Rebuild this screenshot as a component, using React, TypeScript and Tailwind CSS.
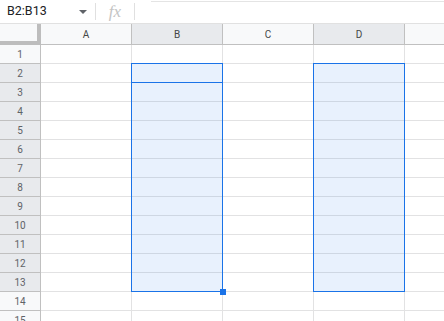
import React from "react";

const cols = ["A", "B", "C", "D"];
const selCols = new Set(["B", "D"]);
const rows = Array.from({ length: 15 }, (_, i) => i + 1);

export default function App() {
  return (
    <div
      className="relative w-[444px] h-[321px] overflow-hidden bg-white"
      style={{ fontFamily: "Roboto, 'Liberation Sans', Arial, sans-serif" }}
    >
      {/* Formula bar */}
      <div className="flex h-[24px] items-center border-b border-[#e1e1e1]">
        <div className="flex w-[95px] items-center pl-[7px] pr-[8px]">
          <span className="flex-1 text-[12.5px] text-[#202124]">B2:B13</span>
          <span className="h-0 w-0 border-l-[4px] border-r-[4px] border-t-[4px] border-l-transparent border-r-transparent border-t-[#5f6368]" />
        </div>
        <div className="h-[17px] w-px bg-[#e0e0e0]" />
        <div className="flex w-[38px] justify-center">
          <span
            className="text-[17px] italic leading-none text-[#c4c4c4]"
            style={{ fontFamily: "'Liberation Serif', 'DejaVu Serif', serif" }}
          >
            fx
          </span>
        </div>
        <div className="h-[17px] w-px bg-[#e0e0e0]" />
        <div className="flex-1 self-start pl-[16px]">
          <div className="mt-px h-px bg-[#e4e4e4]" />
        </div>
      </div>

      {/* Column header row */}
      <div className="flex h-[21px]">
        <div className="h-[21px] w-[41px] border-r-4 border-b-4 border-[#bdbdbd] bg-[#f8f9fa]" />
        {cols.map((c) => (
          <div
            key={c}
            className={`flex h-[21px] w-[91px] items-center justify-center border-r border-b border-[#c0c0c0] text-[10px] text-[#444746] ${
              selCols.has(c) ? "bg-[#e8eaed]" : "bg-[#f8f9fa]"
            }`}
          >
            {c}
          </div>
        ))}
        <div className="h-[21px] flex-1 border-b border-[#c0c0c0] bg-[#f8f9fa]" />
      </div>

      {/* Grid rows */}
      {rows.map((r) => {
        const sel = r >= 2 && r <= 13;
        return (
          <div key={r} className="flex h-[19px]">
            <div
              className={`flex w-[41px] items-center justify-center border-r border-b border-[#c0c0c0] text-[10px] text-[#5f6368] ${
                sel ? "bg-[#e8eaed]" : "bg-[#f8f9fa]"
              }`}
            >
              {r}
            </div>
            {cols.map((c) => (
              <div key={c} className="w-[91px] border-r border-b border-[#e2e2e3]" />
            ))}
            <div className="flex-1 border-b border-[#e2e2e3]" />
          </div>
        );
      })}

      {/* Selection B2:B13 */}
      <div className="absolute left-[131px] top-[63px] h-[229px] w-[92px] border border-[#1a73e8] bg-[#1a73e8]/10" />
      {/* Active cell B2 */}
      <div className="absolute left-[131px] top-[63px] h-[20px] w-[92px] border border-[#1a73e8]" />
      {/* Fill handle */}
      <div className="absolute left-[220px] top-[289px] h-[6px] w-[6px] bg-[#1a73e8]" />

      {/* Selection D2:D13 */}
      <div className="absolute left-[313px] top-[63px] h-[229px] w-[92px] border border-[#1a73e8] bg-[#1a73e8]/10" />
    </div>
  );
}
